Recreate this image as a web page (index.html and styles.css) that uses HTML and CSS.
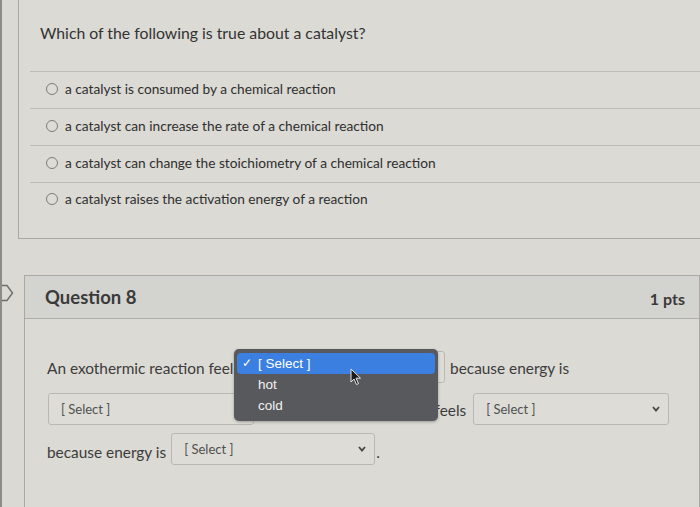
FILE: index.html
```html
<!DOCTYPE html>
<html>
<head>
<meta charset="utf-8">
<link rel="stylesheet" href="styles.css">
</head>
<body>
<div class="page">
  <section class="card prev">
    <p class="prompt">Which of the following is true about a catalyst?</p>
    <ul class="answers">
      <li><span class="radio"></span>a catalyst is consumed by a chemical reaction</li>
      <li><span class="radio"></span>a catalyst can increase the rate of a chemical reaction</li>
      <li><span class="radio"></span>a catalyst can change the stoichiometry of a chemical reaction</li>
      <li><span class="radio"></span>a catalyst raises the activation energy of a reaction</li>
    </ul>
  </section>

  <section class="card q8">
    <svg class="flag" width="14" height="18" viewBox="0 0 14 18"><path d="M-4 1.5 H7 L12.5 9 L7 16.5 H-4" fill="none" stroke="#6d6d6a" stroke-width="1.4"/></svg>
    <header class="q-head">
      <h2>Question 8</h2>
      <span class="pts">1 pts</span>
    </header>
    <div class="q-body">
      <p class="blanks">An exothermic reaction feels <span class="sel s1"><span class="sel-text">[ Select ]</span><svg class="chev" width="8" height="6" viewBox="0 0 8 6"><path d="M1 1 L4 4.5 L7 1" fill="none" stroke="#444" stroke-width="1.8"/></svg></span> because energy is <span class="sel s2"><span class="sel-text">[ Select ]</span><svg class="chev" width="8" height="6" viewBox="0 0 8 6"><path d="M1 1 L4 4.5 L7 1" fill="none" stroke="#444" stroke-width="1.8"/></svg></span>. An endothermic reaction feels <span class="sel s3"><span class="sel-text">[ Select ]</span><svg class="chev" width="8" height="6" viewBox="0 0 8 6"><path d="M1 1 L4 4.5 L7 1" fill="none" stroke="#444" stroke-width="1.8"/></svg></span> because energy is <span class="sel s4"><span class="sel-text">[ Select ]</span><svg class="chev" width="8" height="6" viewBox="0 0 8 6"><path d="M1 1 L4 4.5 L7 1" fill="none" stroke="#444" stroke-width="1.8"/></svg></span>.</p>
    </div>
    <div class="menu">
      <div class="opt active"><span class="check">✓</span>[ Select ]</div>
      <div class="opt">hot</div>
      <div class="opt">cold</div>
      <svg class="cursor" width="12" height="18" viewBox="0 0 12 18"><path d="M1 1 L1 14 L4 11 L6.5 16.5 L8.5 15.6 L6 10.2 L10.5 10.2 Z" fill="#1c1c1c" stroke="#e8e8e8" stroke-width="1"/></svg>
    </div>
  </section>
</div>
</body>
</html>
```

FILE: styles.css
```css
* { box-sizing: border-box; }
html, body { margin: 0; padding: 0; }
body {
  width: 700px;
  height: 507px;
  overflow: hidden;
  background: #d9d8d2;
  font-family: Lato, "Open Sans", sans-serif;
  color: #383838;
}
.page {
  width: 700px;
  height: 507px;
  overflow: hidden;
  border-left: 2px solid #8c8b86;
  background: #dad9d3;
}
.card {
  border: 1px solid #a9a8a3;
  background: #dbdad4;
}
.prev {
  margin-left: 16px;
  margin-right: -20px;
  border-top: none;
  height: 239px;
  padding-top: 23px;
}
.prompt {
  margin: 0 0 0 21px;
  font-size: 15.8px;
  line-height: 20px;
  color: #333;
}
.answers {
  list-style: none;
  margin: 28px 0 0 11px;
  padding: 0;
}
.answers li {
  border-top: 1px solid #bdbcb6;
  height: 37px;
  display: flex;
  align-items: center;
  padding-left: 16px;
  padding-bottom: 3px;
  font-size: 13.7px;
  color: #2f2f2f;
}
.answers li:last-child { padding-bottom: 5px; }
.radio {
  width: 12px;
  height: 12px;
  border: 1px solid #7c7c79;
  border-radius: 50%;
  margin-right: 7px;
  background: #dedcd6;
  flex: none;
}
.q8 {
  position: relative;
  margin: 36px 0 0 22px;
  width: 676px;
  height: 240px;
}
.flag {
  position: absolute;
  left: -25px;
  top: 8px;
}
.q-head {
  height: 43px;
  background: #d3d3cf;
  border-bottom: 1px solid #aeada8;
  display: flex;
  align-items: center;
  justify-content: space-between;
  padding: 0 14px 0 20px;
}
.q-head h2 {
  margin: 0;
  font-size: 18.5px;
  font-weight: 700;
  color: #3a3a3a;
}
.pts {
  font-size: 16px;
  font-weight: 700;
  color: #3a3a3a;
  margin-top: 2px;
}
.q-body {
  padding: 28px 12px 0 22px;
}
.blanks {
  margin: 0;
  font-size: 15.4px;
  line-height: 42px;
  color: #3c3c3c;
}
.sel {
  display: inline-flex;
  align-items: center;
  justify-content: space-between;
  width: 204px;
  height: 32px;
  vertical-align: middle;
  border: 1px solid #b9b8b2;
  border-radius: 3px;
  background: #dddcd6;
  padding: 0 8px 0 12px;
  margin: -6px 1px 0;
  line-height: 1;
}
.s1 { width: 200px; }
.s2 { width: 206px; margin-right: 2px; }
.s3 { width: 196px; margin-left: 3px; }
.s4 { margin-top: -10px; }
.sel-text {
  font-size: 13px;
  color: #505050;
}
.chev { flex: none; }
.menu {
  position: absolute;
  left: 209px;
  top: 73px;
  width: 204px;
  height: 72px;
  background: #58595d;
  border-radius: 5px;
  padding: 4px 3px;
  font-family: "Liberation Sans", Arial, sans-serif;
  font-size: 13.5px;
  color: #f2f2f2;
  box-shadow: 0 1px 3px rgba(0,0,0,0.3);
}
.opt {
  height: 21px;
  line-height: 21px;
  padding-left: 21px;
  position: relative;
}
.opt.active {
  background: #3b7fe0;
  border-radius: 4px;
  color: #fff;
}
.check {
  position: absolute;
  left: 5px;
  font-size: 12px;
}
.cursor {
  position: absolute;
  left: 116px;
  top: 19px;
}
```
